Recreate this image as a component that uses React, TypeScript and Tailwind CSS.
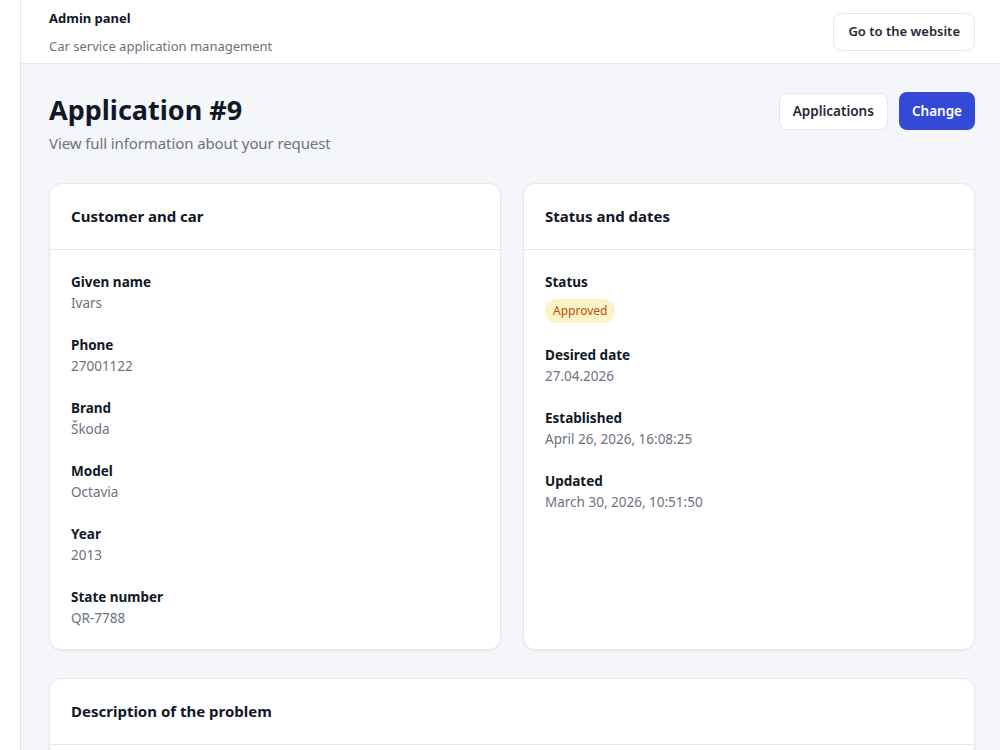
import React from "react"

interface Field {
  label: string
  value: string
}

const customer: Field[] = [
  { label: "Given name", value: "Ivars" },
  { label: "Phone", value: "27001122" },
  { label: "Brand", value: "Škoda" },
  { label: "Model", value: "Octavia" },
  { label: "Year", value: "2013" },
  { label: "State number", value: "QR-7788" },
]

const dates: Field[] = [
  { label: "Desired date", value: "27.04.2026" },
  { label: "Established", value: "April 26, 2026, 16:08:25" },
  { label: "Updated", value: "March 30, 2026, 10:51:50" },
]

function Card({ title, children }: { title: string; children?: React.ReactNode }) {
  return (
    <div className="bg-white rounded-xl border border-[#e3e7ef] shadow-[0_1px_2px_rgba(16,24,40,0.05)] flex flex-col">
      <div className="h-[66px] px-[21px] flex items-center border-b border-[#e3e7ef]">
        <h2 className="text-[15px] font-bold text-[#111827]">{title}</h2>
      </div>
      {children}
    </div>
  )
}

function FieldRow({ field }: { field: Field }) {
  return (
    <div className="flex flex-col gap-[1px]">
      <span className="text-[13.5px] font-bold text-[#111827] leading-5">{field.label}</span>
      <span className="text-[13.5px] text-[#6b7280] leading-5">{field.value}</span>
    </div>
  )
}

export default function App() {
  return (
    <div
      className="h-[750px] overflow-hidden flex bg-white"
      style={{ fontFamily: '"Noto Sans", "Open Sans", sans-serif' }}
    >
      {/* Sidebar edge */}
      <div className="w-[21px] shrink-0 border-r border-[#e3e7ef] bg-white" />

      <div className="flex-1 flex flex-col bg-[#f5f6fa]">
        {/* Header */}
        <header className="h-[64px] shrink-0 bg-white border-b border-[#e3e7ef] pl-7 pr-[25px] flex items-center justify-between">
          <div className="flex flex-col pt-[1px]">
            <span className="text-[13px] font-bold text-[#111827] leading-5">Admin panel</span>
            <span className="text-[13px] text-[#6b7280] leading-5 mt-[8px]">Car service application management</span>
          </div>
          <button className="h-[38px] px-[14px] rounded-lg border border-[#e3e7ef] bg-white text-[13px] font-semibold text-[#1f2937]">
            Go to the website
          </button>
        </header>

        {/* Main */}
        <main className="pl-7 pr-[25px] pt-[28px] flex flex-col">
          <div className="flex items-start justify-between">
            <div className="flex flex-col">
              <h1 className="text-[27px] font-bold text-[#111827] leading-9">Application #9</h1>
              <p className="text-[15px] tracking-[-0.1px] text-[#6b7280] leading-6 mt-[3px]">
                View full information about your request
              </p>
            </div>
            <div className="flex items-center gap-[11px]">
              <button className="h-[37px] px-[13px] rounded-lg border border-[#e3e7ef] bg-white text-[13.5px] font-semibold text-[#1f2937]">
                Applications
              </button>
              <button className="h-[38px] px-[13px] rounded-lg bg-[#3449d6] text-[13.5px] font-semibold text-white">
                Change
              </button>
            </div>
          </div>

          <div className="grid grid-cols-2 gap-[22px] mt-[28px]">
            <Card title="Customer and car">
              <div className="px-[21px] pt-[22px] pb-[21px] flex flex-col gap-[22px]">
                {customer.map((f) => (
                  <FieldRow key={f.label} field={f} />
                ))}
              </div>
            </Card>
            <Card title="Status and dates">
              <div className="px-[21px] pt-[22px] pb-[21px] flex flex-col gap-[22px]">
                <div className="flex flex-col">
                  <span className="text-[13.5px] font-bold text-[#111827] leading-5">Status</span>
                  <span className="mt-[7px] self-start px-2 h-[24px] flex items-center rounded-full bg-[#fdf1c7] text-[12px] text-[#b45309]">
                    Approved
                  </span>
                </div>
                {dates.map((f) => (
                  <FieldRow key={f.label} field={f} />
                ))}
              </div>
            </Card>
          </div>

          <div className="mt-[28px]">
            <Card title="Description of the problem">
              <div className="h-[40px]" />
            </Card>
          </div>
        </main>
      </div>
    </div>
  )
}
